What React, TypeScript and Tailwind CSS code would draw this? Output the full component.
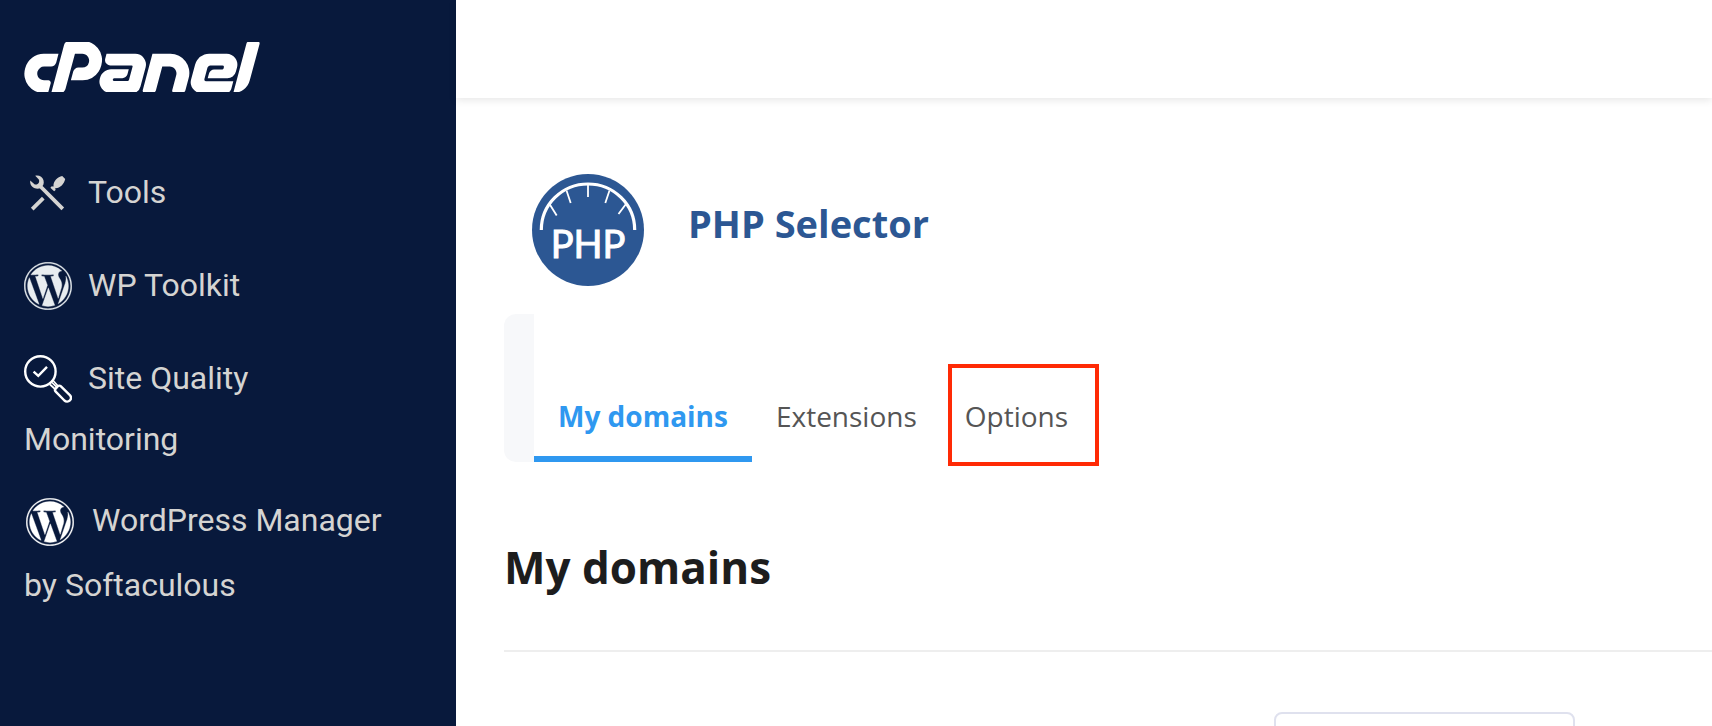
import type { ReactNode } from 'react';
import { FaWordpress } from 'react-icons/fa';
import { SiCpanel } from 'react-icons/si';

function ToolsIcon({ className }: { className: string }) {
  return (
    <svg viewBox="0 0 48 48" className={className} fill="none" stroke="currentColor" aria-hidden="true">
      <path d="M15.5 16.500 38.800 39.800" strokeWidth="3.800" />
      <path
        d="M11.200 6.700c3.800-.9 7.300 1.100 8.300 4.600.8 3-.2 5.600-2.300 7.200-2.600 1.900-6 1.700-8.600-.4C6.700 16.500 5.900 14.300 6.200 11.500l4.600 3.900c1.800.4 3.200-.2 4-1.700.6-1.300.5-2.400-.2-3.500z"
        fill="currentColor"
        stroke="none"
      />
      <path d="M8.200 40.200 19.300 29.100" strokeWidth="3.800" />
      <path d="M29.500 17.300C29.200 12 33.600 7.900 38.200 7L41.200 10C40.200 14.800 36.200 19.200 31.600 19.200L29.700 21 27.900 19.200z" fill="currentColor" stroke="none" />
      <path d="M27.200 17.800 31 21.500" strokeWidth="2.400" />
    </svg>
  );
}

function QualityIcon({ className }: { className: string }) {
  return (
    <svg viewBox="0 0 48 48" className={className} fill="none" stroke="#ffffff" strokeWidth="2.400" aria-hidden="true">
      <circle cx="16.400" cy="16.400" r="15.200" />
      <path d="M9.600 16.600 14.300 20.900 23 11.900" />
      <path d="M26 29.500 31.500 34.500M29.500 26 34.500 31.500M28 27.500 33.200 32.700" strokeWidth="1.700" />
      <path d="M31.700 33.600l2.200-2.400c.8-.8 2-.8 2.800 0l8.900 8.700c1.800 1.800 1.800 4 .3 5.500s-3.900 1.600-5.500.1l-8.700-8.900c-.9-.9-.9-2.100 0-3z" />
    </svg>
  );
}

function PhpSelectorIcon() {
  return (
    <svg viewBox="0 0 112 112" className="size-28 shrink-0" aria-hidden="true">
      <circle cx="56" cy="56" r="56" fill="#2c5793" />
      <path
        d="M9.300 56A46.700 46 0 0 1 102.700 56"
        fill="none"
        stroke="#ffffff"
        strokeWidth="3.200"
      />
      <path
        d="M56 10v13M34.500 16.500 38.700 29M77.500 16.500 73.300 29M17.500 30 24.700 41.500M94 30 86.500 40"
        fill="none"
        stroke="#ffffff"
        strokeWidth="1.800"
      />
      <text
        x="56"
        y="84"
        textAnchor="middle"
        fill="#ffffff"
        stroke="#ffffff"
        strokeWidth="1"
        fontSize="38"
        className="font-['Lato',sans-serif]"
      >
        PHP
      </text>
    </svg>
  );
}

function SideLink({ icon, children }: { icon: ReactNode; children: ReactNode }) {
  return (
    <a href="#" className="block leading-[61px]">
      {icon}
      {children}
    </a>
  );
}

function Sidebar() {
  return (
    <aside className="w-[456px] shrink-0 bg-[#08193c] px-6 pt-[42px] font-['Roboto',sans-serif] text-[32px] text-[#d5d4d2]">
      <a href="#" aria-label="cPanel" className="block text-white">
        <SiCpanel viewBox="0 9.45 24 5.1" className="h-[50px] w-[236px]" />
      </a>
      <nav className="mt-[70px] flex flex-col gap-8">
        <SideLink icon={<ToolsIcon className="mr-4 inline-block size-12 align-[-14px]" />}>Tools</SideLink>
        <SideLink
          icon={
            <FaWordpress
              viewBox="6 6 500 500"
              strokeWidth="4"
              className="mr-4 inline-block size-12 align-[-14px] text-[#e8edf0]"
            />
          }
        >
          WP Toolkit
        </SideLink>
        <SideLink icon={<QualityIcon className="mr-4 inline-block size-12 align-[-14px]" />}>
          Site Quality
          <br />
          Monitoring
        </SideLink>
      </nav>
      <a href="#" className="mt-[18px] block leading-[65px]">
        <FaWordpress
          viewBox="6 6 500 500"
          strokeWidth="4"
          className="mr-[18px] ml-0.5 inline-block size-12 align-[-15px] text-white"
        />
        WordPress Manager
        <br />
        by Softaculous
      </a>
    </aside>
  );
}

function Tabs() {
  return (
    <div className="mt-7 flex h-[148px]">
      <div className="w-[30px] rounded-l-xl bg-[#f7f8fa]" />
      <div role="tablist" className="flex items-end text-[28px] leading-[38px] text-[#555555]">
        <button
          role="tab"
          aria-selected="true"
          className="border-b-6 border-[#2f98f0] px-6 pb-[21px] font-bold text-[#2f98f0]"
        >
          My domains
        </button>
        <button role="tab" aria-selected="false" className="px-6 pb-[27px]">
          Extensions
        </button>
        <button role="tab" aria-selected="false" className="relative px-6 pb-[27px]">
          Options
          <span className="absolute -bottom-1 left-[7px] h-[102px] w-[151px] border-4 border-[#ff2a05]" />
        </button>
      </div>
    </div>
  );
}

export default function App() {
  return (
    <div className="flex h-screen overflow-hidden bg-white font-['Open_Sans',sans-serif]">
      <Sidebar />
      <div className="min-w-0 flex-1">
        <header className="h-[98px] bg-white shadow-[0_2px_8px_rgba(0,0,0,0.1)]" />
        <main className="pt-[76px] pl-12">
          <div className="flex gap-11 pl-7">
            <PhpSelectorIcon />
            <h1 className="pt-[23px] text-[38px] leading-[53px] font-bold text-[#2c5793]">PHP Selector</h1>
          </div>
          <Tabs />
          <h2 className="mt-[75px] text-[44px] leading-[60px] font-bold text-[#1d1d1d]">My domains</h2>
          <hr className="mt-[53px] border-t-2 border-[#eeeeee]" />
          <div className="mt-[60px] flex justify-end pr-[137px]">
            <select
              aria-label="PHP version"
              className="h-20 w-[301px] appearance-none rounded-lg border-2 border-[#dfe1ee] bg-white"
            />
          </div>
        </main>
      </div>
    </div>
  );
}
